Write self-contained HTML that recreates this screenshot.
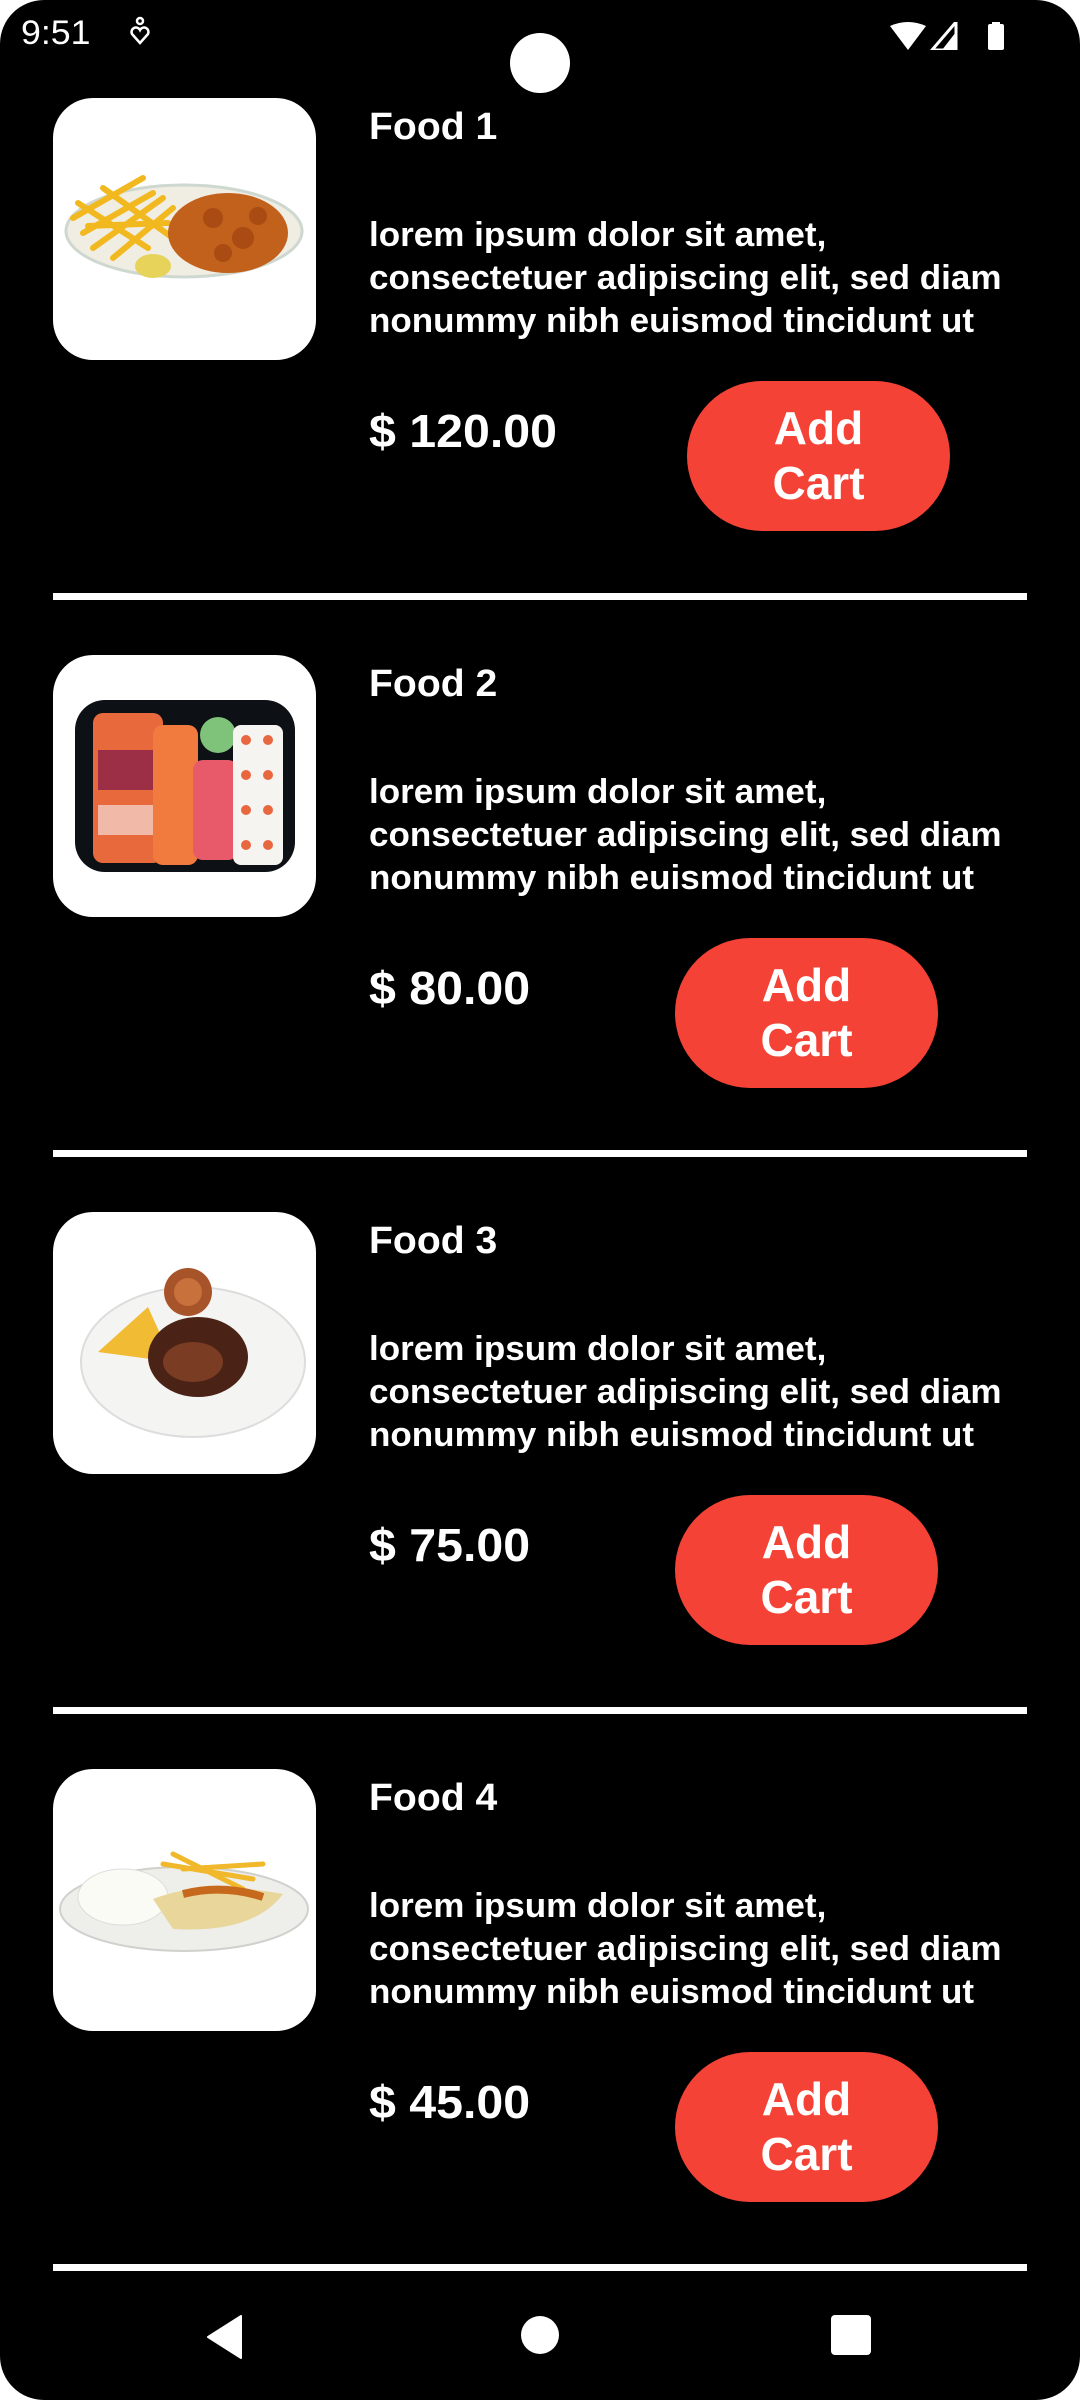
<!DOCTYPE html>
<html><head><meta charset="utf-8"><style>
*{margin:0;padding:0;box-sizing:border-box}
body{width:1080px;height:2400px;background:#fff;overflow:hidden;font-family:"Liberation Sans",sans-serif}
#scr{position:absolute;left:0;top:0;width:1080px;height:2400px;background:#000;border-radius:44px;overflow:hidden}
.a{position:absolute}
.img{position:absolute;left:53px;width:263px;height:262px;background:#fff;border-radius:40px;overflow:hidden}
.t{position:absolute;left:369px;color:#fff;font-weight:bold;white-space:nowrap;transform-origin:left top}
.title{font-size:38px;transform:scaleX(1.03)}
.desc{font-size:34px;line-height:43px;transform:scaleX(1.03)}
.price{font-size:46px;transform:scaleX(1.05)}
.btn{position:absolute;width:263px;height:150px;border-radius:75px;background:#f44336;color:#fff;font-weight:bold;font-size:46px;line-height:55px;text-align:center;padding-top:20px}
.btn span{display:inline-block;transform:scaleX(1.0)}
.div{position:absolute;left:53px;width:974px;height:7px;background:#fff}
</style></head><body><div id="scr">
<div class="t" style="left:21px;top:14px;font-size:34px;font-weight:normal;transform:scaleX(1.05)">9:51</div>
<svg class="a" style="left:128px;top:16px" width="24" height="30" viewBox="0 0 24 30"><circle cx="12" cy="5" r="3" fill="none" stroke="#fff" stroke-width="2.5"/><path d="M12 27 L4 18 A4 4 0 0 1 12 14 A4 4 0 0 1 20 18 Z" fill="none" stroke="#fff" stroke-width="2.5"/></svg>
<svg class="a" style="left:890px;top:22px" width="120" height="28" viewBox="0 0 120 28"><path d="M0 4 Q18 -4 36 4 L18 28 Z" fill="#fff"/><path d="M66 0 L66 28 L42 28 Z" fill="none" stroke="#fff" stroke-width="3"/><path d="M66 10 L66 28 L52 28 Z" fill="#fff"/><rect x="98" y="2" width="16" height="26" rx="2" fill="#fff"/><rect x="102" y="0" width="8" height="4" fill="#fff"/></svg>
<div class="a" style="left:510px;top:33px;width:60px;height:60px;border-radius:50%;background:#fff"></div>

<!-- item 1 -->
<div class="img" style="top:98px"><svg width="263" height="262" viewBox="0 0 263 262"><ellipse cx="131" cy="133" rx="118" ry="46" fill="#f0ede2" stroke="#cfd8d0" stroke-width="3"/><g stroke="#f2b81f" stroke-width="6" stroke-linecap="round"><path d="M20 120 L90 80"/><path d="M30 135 L100 95"/><path d="M40 150 L110 100"/><path d="M25 105 L95 150"/><path d="M50 90 L120 140"/><path d="M60 160 L120 110"/><path d="M35 128 L115 125"/></g><ellipse cx="175" cy="135" rx="60" ry="40" fill="#c2611c"/><g fill="#a94b12"><circle cx="160" cy="120" r="10"/><circle cx="190" cy="140" r="11"/><circle cx="170" cy="155" r="9"/><circle cx="205" cy="118" r="9"/></g><ellipse cx="100" cy="168" rx="18" ry="12" fill="#e7d35a"/></svg></div>
<div class="t title" style="top:106px">Food 1</div>
<div class="t desc" style="top:214px">lorem ipsum dolor sit amet,<br>consectetuer adipiscing elit, sed diam<br>nonummy nibh euismod tincidunt ut</div>
<div class="t price" style="top:404px">$ 120.00</div>
<div class="btn" style="left:687px;top:381px"><span>Add<br>Cart</span></div>
<div class="div" style="top:593px"></div>

<!-- item 2 -->
<div class="img" style="top:655px"><svg width="263" height="262" viewBox="0 0 263 262"><rect x="22" y="45" width="220" height="172" rx="30" fill="#0d1014"/><rect x="40" y="58" width="70" height="150" rx="10" fill="#e86a3c"/><rect x="45" y="95" width="55" height="40" fill="#9c2f45"/><rect x="45" y="150" width="55" height="30" fill="#f0b9a8"/><rect x="100" y="70" width="45" height="140" rx="10" fill="#f17a3e"/><rect x="140" y="105" width="45" height="100" rx="10" fill="#e8596a"/><circle cx="165" cy="80" r="18" fill="#7fc27a"/><g fill="#f6f4f0"><rect x="180" y="70" width="50" height="140" rx="8"/></g><g fill="#e8673f"><circle cx="193" cy="85" r="5"/><circle cx="215" cy="85" r="5"/><circle cx="193" cy="120" r="5"/><circle cx="215" cy="120" r="5"/><circle cx="193" cy="155" r="5"/><circle cx="215" cy="155" r="5"/><circle cx="193" cy="190" r="5"/><circle cx="215" cy="190" r="5"/></g></svg></div>
<div class="t title" style="top:663px">Food 2</div>
<div class="t desc" style="top:771px">lorem ipsum dolor sit amet,<br>consectetuer adipiscing elit, sed diam<br>nonummy nibh euismod tincidunt ut</div>
<div class="t price" style="top:961px">$ 80.00</div>
<div class="btn" style="left:675px;top:938px"><span>Add<br>Cart</span></div>
<div class="div" style="top:1150px"></div>

<!-- item 3 -->
<div class="img" style="top:1212px"><svg width="263" height="262" viewBox="0 0 263 262"><ellipse cx="140" cy="150" rx="112" ry="75" fill="#f4f4f2" stroke="#ddd" stroke-width="2"/><path d="M45 140 L95 95 L120 150 Z" fill="#f1bb33"/><ellipse cx="145" cy="145" rx="50" ry="40" fill="#4a2216"/><ellipse cx="140" cy="150" rx="30" ry="20" fill="#7a3c22"/><circle cx="135" cy="80" r="24" fill="#a8542b"/><circle cx="135" cy="80" r="14" fill="#c8713c"/></svg></div>
<div class="t title" style="top:1220px">Food 3</div>
<div class="t desc" style="top:1328px">lorem ipsum dolor sit amet,<br>consectetuer adipiscing elit, sed diam<br>nonummy nibh euismod tincidunt ut</div>
<div class="t price" style="top:1518px">$ 75.00</div>
<div class="btn" style="left:675px;top:1495px"><span>Add<br>Cart</span></div>
<div class="div" style="top:1707px"></div>

<!-- item 4 -->
<div class="img" style="top:1769px"><svg width="263" height="262" viewBox="0 0 263 262"><ellipse cx="131" cy="140" rx="124" ry="42" fill="#eeeeea" stroke="#d0d0cc" stroke-width="2"/><ellipse cx="70" cy="128" rx="45" ry="28" fill="#fbfbf6" stroke="#ddd"/><g stroke="#f0b82a" stroke-width="5" stroke-linecap="round"><path d="M110 95 L200 110"/><path d="M120 85 L190 120"/><path d="M130 100 L210 95"/></g><path d="M100 130 Q150 110 230 125 Q200 165 120 160 Z" fill="#e9d69a"/><path d="M130 125 Q170 115 210 128" stroke="#c7691d" stroke-width="8" fill="none"/></svg></div>
<div class="t title" style="top:1777px">Food 4</div>
<div class="t desc" style="top:1885px">lorem ipsum dolor sit amet,<br>consectetuer adipiscing elit, sed diam<br>nonummy nibh euismod tincidunt ut</div>
<div class="t price" style="top:2075px">$ 45.00</div>
<div class="btn" style="left:675px;top:2052px"><span>Add<br>Cart</span></div>
<div class="div" style="top:2264px"></div>

<!-- nav -->
<svg class="a" style="left:205px;top:2315px" width="40" height="44" viewBox="0 0 40 44"><path d="M36 1 L36 43 L3 22 Z" fill="#fff" stroke="#fff" stroke-linejoin="round" stroke-width="2"/></svg>
<div class="a" style="left:521px;top:2316px;width:38px;height:38px;border-radius:50%;background:#fff"></div>
<div class="a" style="left:831px;top:2315px;width:40px;height:40px;border-radius:4px;background:#fff"></div>
</div></body></html>
